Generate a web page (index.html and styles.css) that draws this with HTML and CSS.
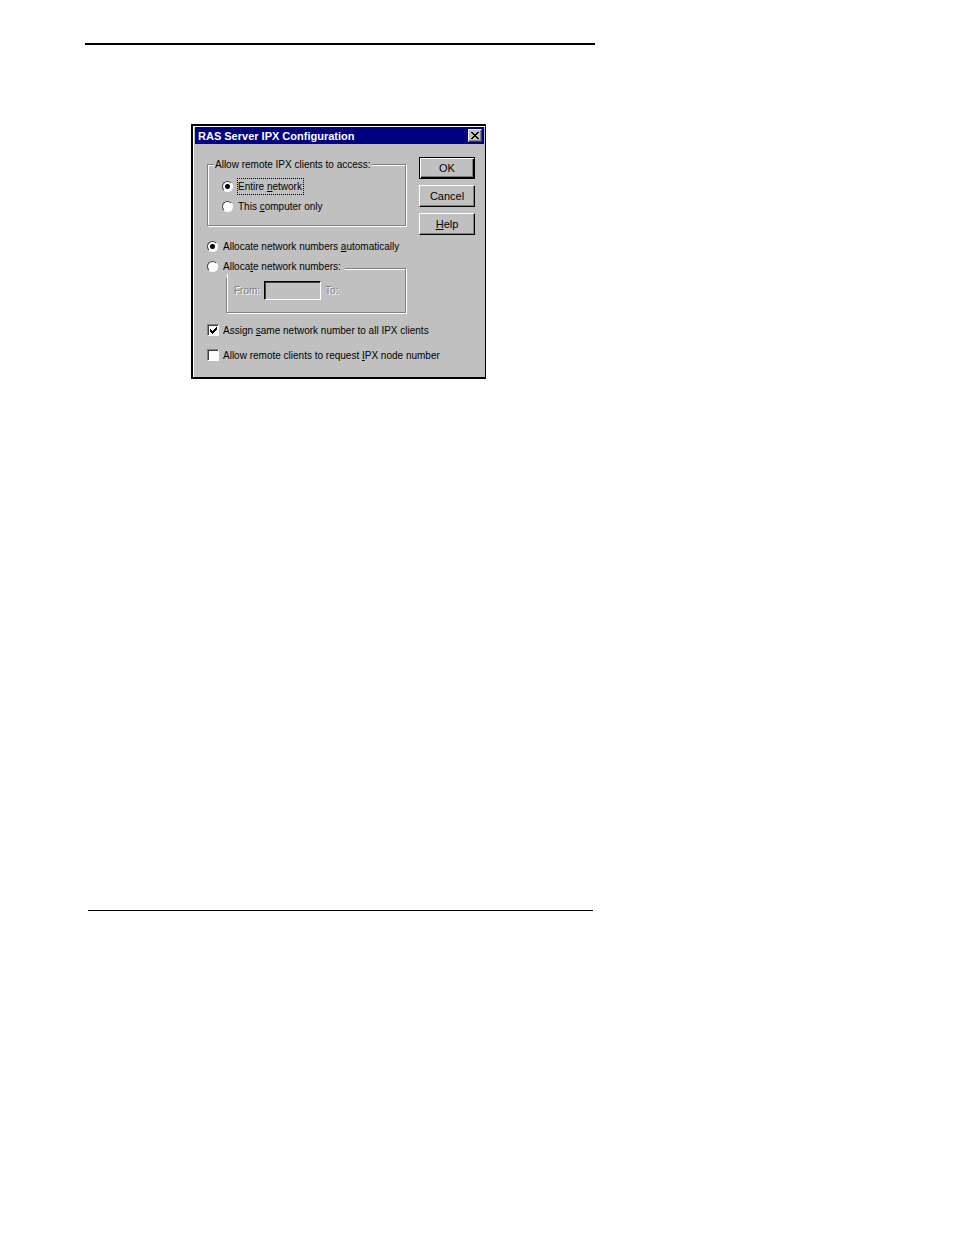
FILE: index.html
```html
<!DOCTYPE html>
<html lang="en">
<head>
<meta charset="utf-8">
<title>RAS Server IPX Configuration</title>
<link rel="stylesheet" href="styles.css">
</head>
<body>
<main class="sheet">
  <hr class="rule rule-top">
  <form class="dialog" role="dialog" aria-labelledby="dialog-title">
    <header class="titlebar">
      <h1 class="title" id="dialog-title">RAS Server IPX Configuration</h1>
      <button class="close" type="button" aria-label="Close">
        <svg width="8" height="7" viewBox="0 0 8 7" shape-rendering="crispEdges" aria-hidden="true"><path d="M0 0h2v1h1v1h2v-1h1v-1h2v1h-1v1h-1v1h-1v1h1v1h1v1h1v1h-2v-1h-1v-1h-2v1h-1v1h-2v-1h1v-1h1v-1h1v-1h-1v-1h-1v-1h-1z"/></svg>
      </button>
    </header>
    <div class="content">
      <div class="upper">
        <fieldset class="group access">
          <legend class="caption">Allow remote IPX clients to access:</legend>
          <label class="option"><input class="radio" type="radio" name="access" checked><span class="focused">Entire <u>n</u>etwork</span></label>
          <label class="option"><input class="radio" type="radio" name="access"><span>This <u>c</u>omputer only</span></label>
        </fieldset>
        <div class="actions">
          <button class="button primary" type="button">OK</button>
          <button class="button" type="button">Cancel</button>
          <button class="button" type="button"><u>H</u>elp</button>
        </div>
      </div>
      <label class="option"><input class="radio" type="radio" name="allocate" checked><span>Allocate network numbers <u>a</u>utomatically</span></label>
      <fieldset class="group range">
        <legend class="range-caption"><label class="option"><input class="radio" type="radio" name="allocate"><span>Alloca<u>t</u>e network numbers:</span></label></legend>
        <div class="range-row">
          <label class="muted" for="from">From:</label>
          <input class="field" id="from" type="text" disabled>
          <span class="muted">To:</span>
        </div>
      </fieldset>
      <div class="checks">
        <label class="option"><input class="check" type="checkbox" checked><span>Assign <u>s</u>ame network number to all IPX clients</span></label>
        <label class="option"><input class="check" type="checkbox"><span>Allow remote clients to request <u>I</u>PX node number</span></label>
      </div>
    </div>
  </form>
  <hr class="rule rule-bottom">
</main>
</body>
</html>
```
FILE: styles.css
```css
* { box-sizing: border-box; }

body {
  margin: 0;
  background: #fff;
  color: #000;
  font: 10px/15px "Liberation Sans", Arial, sans-serif;
}

.sheet {
  display: flex;
  flex-direction: column;
  max-width: 595px;
  min-height: 911px;
  padding: 43px 0 0 85px;
}

.rule { width: auto; margin: 0; border: 0; background: #000; }
.rule-top { height: 2px; }
.rule-bottom { height: 1px; margin: auto 2px 0 3px; }

.dialog {
  width: 295px;
  margin: 79px 0 0 106px;
  border: 2px solid #000;
  border-right-width: 1px;
  background: #c0c0c0;
  box-shadow: inset 1px 1px #fff;
  padding: 1px 1px 0 2px;
}

.titlebar {
  display: flex;
  align-items: center;
  justify-content: space-between;
  height: 17px;
  padding: 0 2px 0 3px;
  background: #000080;
  color: #fff;
}

.title { margin: 0; font-size: 11px; line-height: 14px; }

.close {
  display: grid;
  place-items: center;
  width: 14px;
  height: 13px;
  padding: 0;
  border: 1px solid;
  border-color: #fff #404040 #404040 #fff;
  background: #c0c0c0;
  box-shadow: inset -1px -1px #808080;
}

.content { padding: 13px 9px 12px 12px; }

.upper { display: flex; justify-content: space-between; height: 81px; }

.group {
  min-width: 0;
  margin: 0;
  border: 1px solid #808080;
  box-shadow: inset 1px 1px #fff, 1px 1px #fff;
}

.access {
  width: 199px;
  height: 69px;
  padding: 4px 14px 0;
}

.caption {
  height: 15px;
  margin-left: -8px;
  padding: 0 1px;
  background: #c0c0c0;
}

.option {
  display: flex;
  align-items: center;
  gap: 4px;
  width: max-content;
  height: 20px;
}

.focused { padding-right: 1px; outline: 1px dotted #000; }

.radio, .check {
  appearance: none;
  flex: none;
  margin: 0;
  background: #fff;
}

.radio {
  width: 11px;
  height: 11px;
  margin-right: 1px;
  border: 1px solid;
  border-color: #404040 #fff #fff #404040;
  border-radius: 50%;
}

.radio:checked { background: radial-gradient(circle, #000 0 2px, #fff 3px); }

.check {
  width: 12px;
  height: 12px;
  border: 1px solid;
  border-color: #808080 #fff #fff #808080;
  box-shadow: inset 1px 1px #404040;
}

.check:checked {
  background: #fff url("data:image/svg+xml,%3Csvg xmlns='http://www.w3.org/2000/svg' width='10' height='10' shape-rendering='crispEdges'%3E%3Cpath d='M2 4h1v1h1v1h1v-1h1v-1h1v-1h1v-1h1v3h-1v1h-1v1h-1v1h-1v1h-1v-1h-1v-1h-1z'/%3E%3C/svg%3E") center no-repeat;
}

.actions { display: flex; flex-direction: column; gap: 6px; }

.button {
  width: 56px;
  height: 22px;
  padding: 0;
  border: 1px solid;
  border-color: #fff #000 #000 #fff;
  background: #c0c0c0;
  box-shadow: inset -1px -1px #808080;
  color: #000;
  font-family: inherit;
  font-size: 11px;
}

.primary {
  border-color: #000;
  box-shadow: inset 1px 1px #fff, inset -1px -1px #000, inset -2px -2px #808080;
}

.content > .option { height: 16px; }

.range {
  margin: 4px 69px 0 19px;
  padding: 0 7px 12px;
}

.range-caption { height: 20px; margin-left: -27px; padding: 0; }
.range-caption .option { height: 16px; padding-right: 4px; background: #c0c0c0; }

.range-row { display: flex; align-items: center; gap: 4px; padding-top: 3px; }
.muted { color: #808080; text-shadow: 1px 1px #fff; }

.field {
  width: 57px;
  height: 19px;
  border: 1px solid;
  border-color: #000 #fff #fff #000;
  background: #c0c0c0;
  box-shadow: inset 1px 1px #404040;
  font: inherit;
}

.checks { display: flex; flex-direction: column; gap: 5px; margin-top: 7px; }
```
